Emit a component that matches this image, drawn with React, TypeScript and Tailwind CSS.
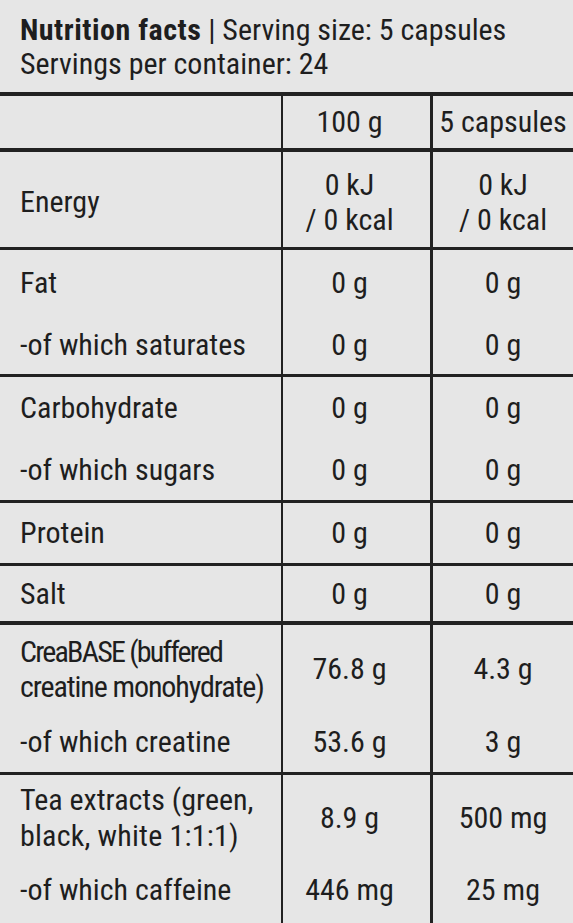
import React from "react";

type RowProps = {
  h: string;
  label: React.ReactNode;
  v1: React.ReactNode;
  v2: React.ReactNode;
  pad?: string;
};

function Row({ h, label, v1, v2, pad = "" }: RowProps) {
  return (
    <div className={`grid grid-cols-[281px_149px_1fr] ${h}`}>
      <div className={`flex items-center pl-[20px] whitespace-nowrap ${pad}`}>{label}</div>
      <div className={`flex items-center justify-center border-l-2 border-[#222] pr-[14px] text-center whitespace-nowrap ${pad}`}>{v1}</div>
      <div className={`flex items-center justify-center border-l-[3px] border-[#222] text-center whitespace-nowrap ${pad}`}>{v2}</div>
    </div>
  );
}

export default function App() {
  return (
    <div className="w-[573px] min-h-[923px] bg-[#e6e6e6] text-[#1e1e1e] [font-family:Roboto] [font-stretch:condensed] text-[30px] leading-[34px]">
      <div className="h-[92px] px-[20px] pt-[13px] whitespace-nowrap">
        <div>
          <span className="font-bold tracking-[0.5px]">Nutrition facts</span> | Serving size: 5 capsules
        </div>
        <div>Servings per container: 24</div>
      </div>

      <div className="border-t-4 border-[#222]">
        <Row h="h-[52px]" label="" v1="100 g" v2="5 capsules" />
      </div>

      <div className="border-t-4 border-[#222]">
        <Row
          h="h-[95px]"
          pad="pt-[5px]"
          label="Energy"
          v1={
            <div className="leading-[35px]">
              <div>0 kJ</div>
              <div>/ 0 kcal</div>
            </div>
          }
          v2={
            <div className="leading-[35px]">
              <div>0 kJ</div>
              <div>/ 0 kcal</div>
            </div>
          }
        />
      </div>

      <div className="border-t-[3px] border-[#222]">
        <Row h="h-[62px]" pad="pt-[4px]" label="Fat" v1="0 g" v2="0 g" />
        <Row h="h-[62px]" pad="pt-[4px]" label="-of which saturates" v1="0 g" v2="0 g" />
      </div>

      <div className="border-t-[3px] border-[#222]">
        <Row h="h-[62px]" label="Carbohydrate" v1="0 g" v2="0 g" />
        <Row h="h-[61px]" label="-of which sugars" v1="0 g" v2="0 g" />
      </div>

      <div className="border-t-[3px] border-[#222]">
        <Row h="h-[60px]" label="Protein" v1="0 g" v2="0 g" />
      </div>

      <div className="border-t-[3px] border-[#222]">
        <Row h="h-[55px]" label="Salt" v1="0 g" v2="0 g" />
      </div>

      <div className="border-t-4 border-[#222]">
        <Row
          h="h-[90px]"
          pad="pb-[2px]"
          label={
            <div className="leading-[35px]">
              <div className="tracking-[-1.8px]">CreaBASE (buffered</div>
              <div className="tracking-[-1.1px]">creatine monohydrate)</div>
            </div>
          }
          v1="76.8 g"
          v2="4.3 g"
        />
        <Row h="h-[57px]" pad="pb-[3px]" label="-of which creatine" v1="53.6 g" v2="3 g" />
      </div>

      <div className="border-t-[3px] border-[#222]">
        <Row
          h="h-[85px]"
          label={
            <div className="leading-[36px]">
              <div>Tea extracts (green,</div>
              <div className="tracking-[0.2px]">black, white 1:1:1)</div>
            </div>
          }
          v1="8.9 g"
          v2="500 mg"
        />
        <Row h="h-[63px]" pad="pb-[4px]" label="-of which caffeine" v1="446 mg" v2="25 mg" />
      </div>
    </div>
  );
}
